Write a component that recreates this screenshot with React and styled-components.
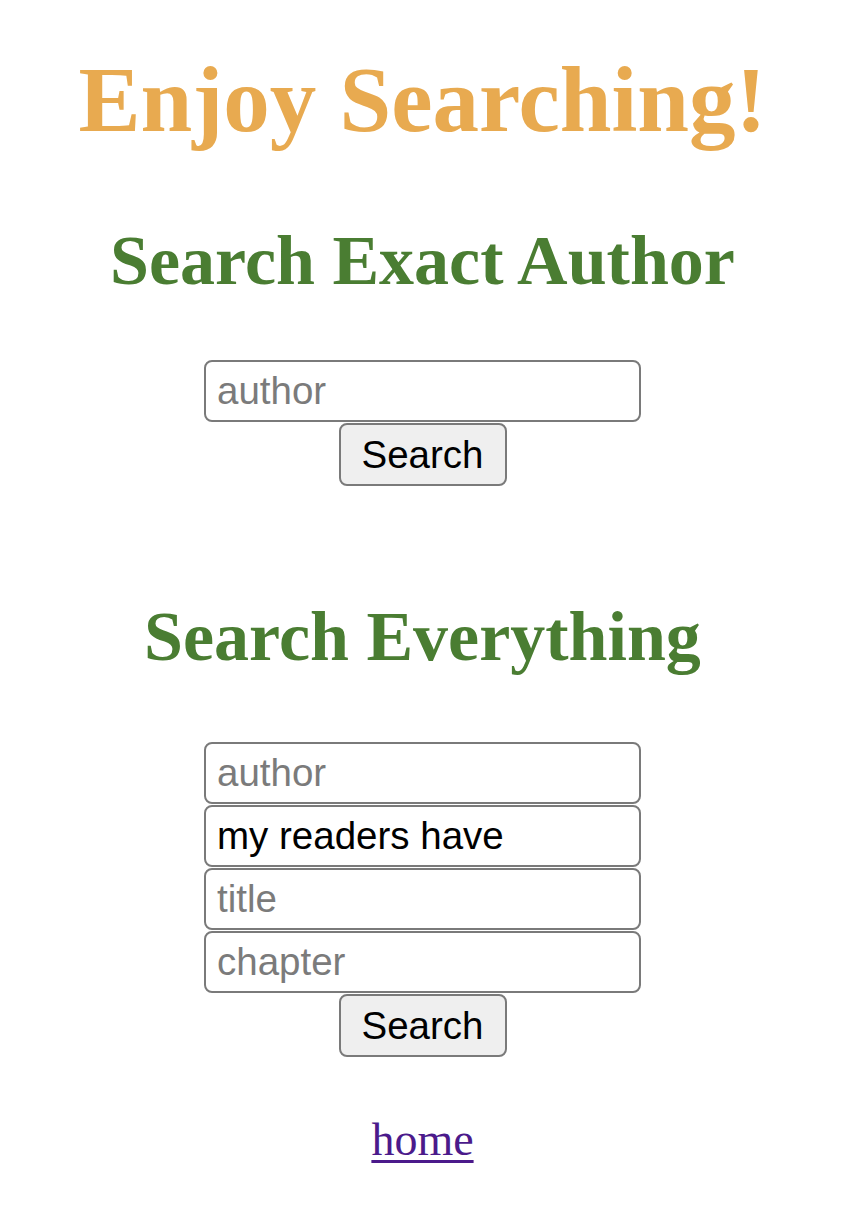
import React from 'react';
import styled, { createGlobalStyle } from 'styled-components';

const GlobalStyle = createGlobalStyle`
  body {
    margin: 0;
    background: #fff;
    font-family: "Liberation Serif", "Times New Roman", serif;
  }
`;

const Page = styled.div`
  width: 845px;
  display: flex;
  flex-direction: column;
  align-items: center;
  padding-bottom: 40px;
`;

const MainTitle = styled.h1`
  margin: 46px 0 0;
  font-size: 93px;
  line-height: 107px;
  font-weight: bold;
  color: #e8aa50;
  white-space: nowrap;
`;

const SectionTitle = styled.h2`
  margin: ${(p) => p.$top}px 0 0;
  font-size: 70px;
  line-height: 80px;
  font-weight: bold;
  color: #4a7d32;
  white-space: nowrap;
`;

const Form = styled.form`
  margin-top: ${(p) => p.$top}px;
  display: flex;
  flex-direction: column;
  align-items: center;
  gap: 1px;
`;

const Field = styled.input`
  box-sizing: border-box;
  width: 437px;
  height: 62px;
  padding: 0 11px;
  border: 2px solid #7a7a7a;
  border-radius: 8px;
  background: #fff;
  font-family: "Liberation Sans", Arial, sans-serif;
  font-size: 38.5px;
  color: #000;
  outline: none;

  &::placeholder {
    color: #7b7b7b;
  }
`;

const SearchButton = styled.button`
  box-sizing: border-box;
  width: 168px;
  height: 63px;
  border: 2px solid #7a7a7a;
  border-radius: 8px;
  background: #efefef;
  font-family: "Liberation Sans", Arial, sans-serif;
  font-size: 38.5px;
  color: #000;
  padding: 0;
`;

const HomeLink = styled.a`
  margin-top: 56px;
  font-size: 46px;
  line-height: 53px;
  color: #4b1a8b;
  text-decoration-thickness: 3px;
  text-underline-offset: 5px;
`;

export default function App() {
  const stop = (e) => e.preventDefault();

  return (
    <>
      <GlobalStyle />
      <Page>
        <MainTitle>Enjoy Searching!</MainTitle>

        <SectionTitle $top={68}>Search Exact Author</SectionTitle>
        <Form $top={59} onSubmit={stop}>
          <Field type="text" placeholder="author" />
          <SearchButton type="submit">Search</SearchButton>
        </Form>

        <SectionTitle $top={111}>Search Everything</SectionTitle>
        <Form $top={65} onSubmit={stop}>
          <Field type="text" placeholder="author" />
          <Field type="text" defaultValue="my readers have" />
          <Field type="text" placeholder="title" />
          <Field type="text" placeholder="chapter" />
          <SearchButton type="submit">Search</SearchButton>
        </Form>

        <HomeLink href="#">home</HomeLink>
      </Page>
    </>
  );
}
